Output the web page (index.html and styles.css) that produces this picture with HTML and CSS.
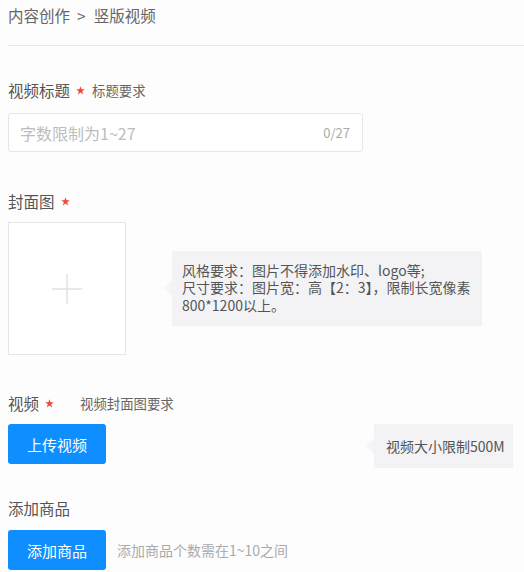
FILE: index.html
```html
<!DOCTYPE html>
<html lang="zh-CN">
<head>
<meta charset="utf-8">
<title>竖版视频</title>
<link rel="stylesheet" href="styles.css">
</head>
<body>
<div class="page">
  <div class="breadcrumb">内容创作<span class="sep">&gt;</span>竖版视频</div>
  <div class="divider"></div>

  <div class="field field-title">
    <div class="label">视频标题<svg class="star" width="9" height="9" viewBox="0 0 10 10"><path d="M5 0.3L6.2 3.7L9.8 3.7L6.9 5.9L8 9.4L5 7.3L2 9.4L3.1 5.9L0.2 3.7L3.8 3.7Z" fill="#f0463c"/></svg><span class="note">标题要求</span></div>
    <div class="input">
      <span class="placeholder">字数限制为1~27</span>
      <span class="counter">0/27</span>
    </div>
  </div>

  <div class="field field-cover">
    <div class="label">封面图<svg class="star" width="9" height="9" viewBox="0 0 10 10"><path d="M5 0.3L6.2 3.7L9.8 3.7L6.9 5.9L8 9.4L5 7.3L2 9.4L3.1 5.9L0.2 3.7L3.8 3.7Z" fill="#f0463c"/></svg></div>
    <div class="cover-row">
      <div class="cover-box">
        <svg width="32" height="32" viewBox="0 0 32 32"><path d="M16 1V31M1 16H31" stroke="#e2e2e2" stroke-width="1.5" fill="none"/></svg>
      </div>
      <div class="tip tip-cover">
        <div class="tip-line">风格要求：图片不得添加水印、logo等;</div>
        <div class="tip-line">尺寸要求：图片宽：高【2：3】，限制长宽像素</div>
        <div class="tip-line">800*1200以上。</div>
      </div>
    </div>
  </div>

  <div class="field field-video">
    <div class="label">视频<svg class="star" width="9" height="9" viewBox="0 0 10 10"><path d="M5 0.3L6.2 3.7L9.8 3.7L6.9 5.9L8 9.4L5 7.3L2 9.4L3.1 5.9L0.2 3.7L3.8 3.7Z" fill="#f0463c"/></svg><span class="note note-wide">视频封面图要求</span></div>
    <div class="video-row">
      <button class="btn">上传视频</button>
      <div class="tip tip-video">视频大小限制500M</div>
    </div>
  </div>

  <div class="field field-goods">
    <div class="label">添加商品</div>
    <div class="goods-row">
      <button class="btn">添加商品</button>
      <span class="hint">添加商品个数需在1~10之间</span>
    </div>
  </div>
</div>
</body>
</html>
```
FILE: styles.css
```css
html, body {
  margin: 0;
  padding: 0;
  background: #fdfdfe;
}
body {
  font-family: "Noto Sans CJK SC", "Noto Sans", sans-serif;
  color: #555;
  width: 524px;
  height: 572px;
  overflow: hidden;
}
.page {
  padding-left: 8px;
}
.breadcrumb {
  font-size: 15.5px;
  line-height: 20px;
  padding-top: 5px;
  color: #666;
}
.sep {
  margin: 0 8px 0 7px;
}
.divider {
  height: 1px;
  background: #e8e8ea;
  margin-top: 20px;
}
.label {
  font-size: 15.5px;
  line-height: 20px;
  color: #555;
  display: flex;
  align-items: center;
}
.star {
  display: block;
  margin: 1px 7px 0 6px;
  flex: none;
}
.note {
  font-size: 13.4px;
  color: #666;
}
.note-wide {
  margin-left: 19px;
}
.field-title {
  margin-top: 34px;
}
.input {
  margin-top: 13px;
  width: 355px;
  height: 39px;
  box-sizing: border-box;
  border: 1px solid #e6e6e8;
  border-radius: 3px;
  background: #fff;
  display: flex;
  align-items: center;
  justify-content: space-between;
  padding: 0 12px 0 11px;
}
.placeholder {
  font-size: 16px;
  color: #bdbdbd;
}
.counter {
  font-size: 13px;
  color: #aaa;
}
.field-cover {
  margin-top: 39px;
}
.cover-row {
  margin-top: 11px;
  display: flex;
  align-items: center;
}
.cover-box {
  width: 118px;
  height: 133px;
  box-sizing: border-box;
  border: 1px solid #e6e6e8;
  background: #fff;
  display: flex;
  align-items: center;
  justify-content: center;
}
.tip {
  position: relative;
  background: #f3f3f5;
  color: #555;
  font-size: 14px;
  line-height: 18px;
}
.tip::before {
  content: "";
  position: absolute;
  left: -8px;
  top: 50%;
  margin-top: -8px;
  border-style: solid;
  border-width: 8px 8px 8px 0;
  border-color: transparent #f5f5f7 transparent transparent;
}
.tip-cover {
  margin-left: 46px;
  width: 310px;
  height: 75px;
  box-sizing: border-box;
  padding: 11px 0 0 10px;
  margin-top: -1px;
}
.tip-line {
  height: 17.5px;
  line-height: 17.5px;
  white-space: nowrap;
}
.field-video {
  margin-top: 38px;
}
.video-row {
  margin-top: 11px;
  display: flex;
  align-items: flex-start;
}
.btn {
  width: 98px;
  height: 40px;
  border: none;
  border-radius: 3px;
  background: #0f8eff;
  color: #fff;
  font-family: "Noto Sans CJK SC", "Noto Sans", sans-serif;
  font-size: 15px;
  padding: 0;
  margin: 0;
}
.tip-video {
  margin-left: 268px;
  width: 139px;
  height: 44px;
  box-sizing: border-box;
  display: flex;
  align-items: center;
  padding-left: 12px;
}
.field-goods {
  margin-top: 30px;
}
.goods-row {
  margin-top: 12px;
  display: flex;
  align-items: center;
}
.hint {
  margin-left: 11px;
  font-size: 14px;
  color: #aaa;
}
```
